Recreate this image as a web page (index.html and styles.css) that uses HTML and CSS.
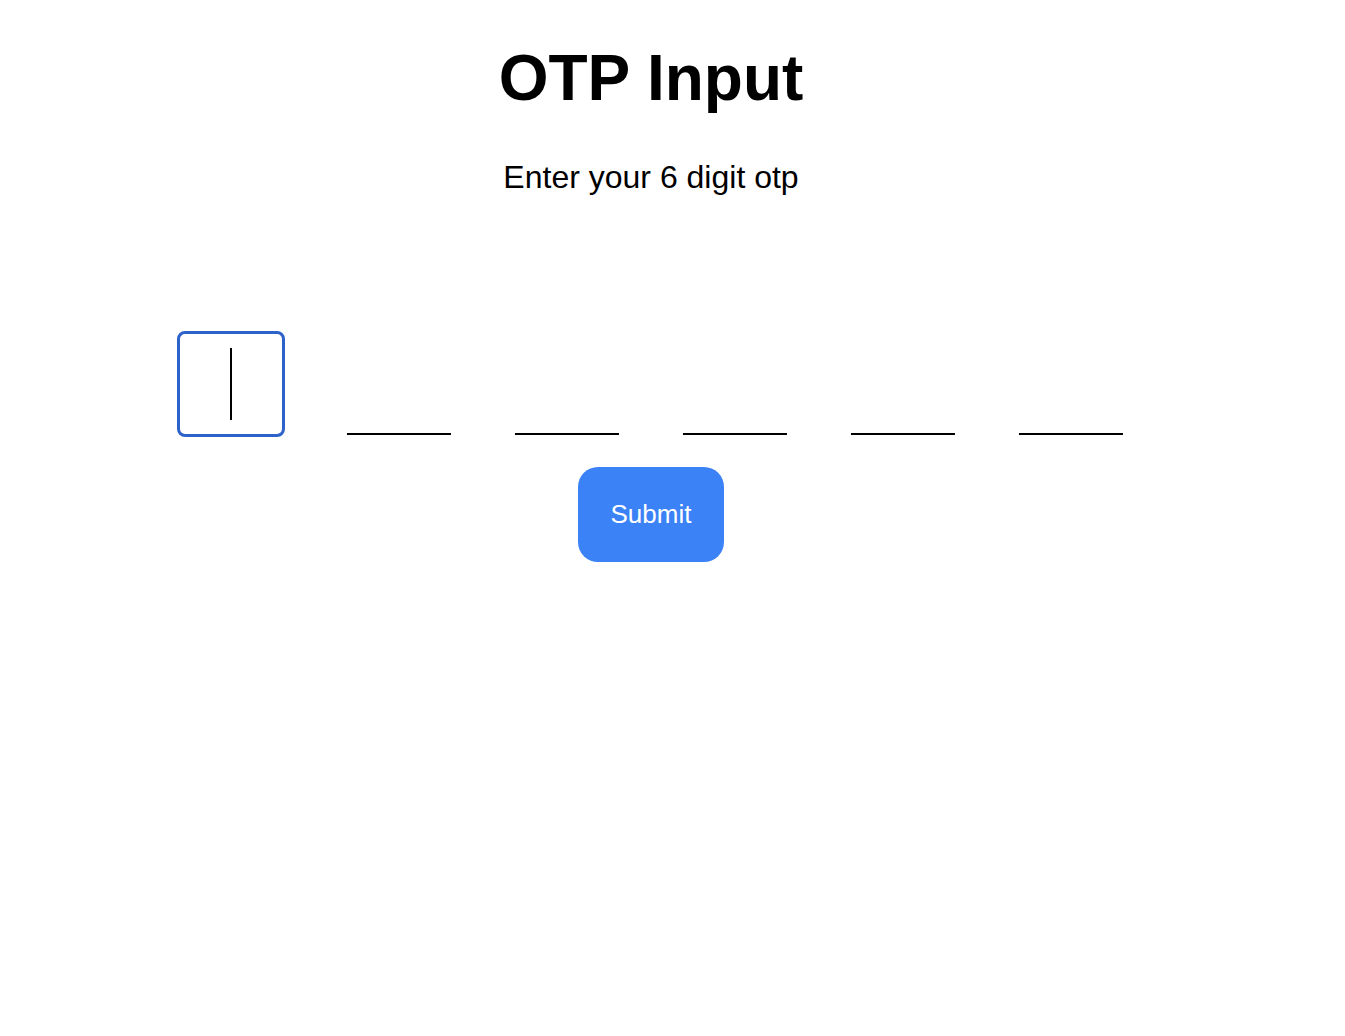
FILE: index.html
```html
<!DOCTYPE html>
<html lang="en">
<head>
<meta charset="utf-8">
<title>OTP Input</title>
<link rel="stylesheet" href="styles.css">
</head>
<body>
<div class="app">
  <h1 class="title">OTP Input</h1>
  <p class="subtitle">Enter your 6 digit otp</p>
  <div class="otp-row">
    <div class="otp-box is-focused"><span class="caret"></span></div>
    <div class="otp-box"></div>
    <div class="otp-box"></div>
    <div class="otp-box"></div>
    <div class="otp-box"></div>
    <div class="otp-box"></div>
  </div>
  <button class="submit" type="button">Submit</button>
</div>
</body>
</html>
```

FILE: styles.css
```css
html, body {
  background: #ffffff;
}
body {
  margin: 8px;
  font-family: "Liberation Sans", Arial, Helvetica, sans-serif;
  color: #000000;
}
.app {
  width: 1286px;
  display: flex;
  flex-direction: column;
  align-items: center;
}
.title {
  margin: 33px 0 0;
  font-size: 64px;
  line-height: 74px;
  font-weight: 700;
}
.subtitle {
  margin: 44px 0 0;
  font-size: 32px;
  line-height: 37px;
}
.otp-row {
  margin-top: 137px;
  display: flex;
  gap: 64px;
}
.otp-box {
  width: 104px;
  height: 100px;
  border-bottom: 2px solid #000000;
  display: flex;
  align-items: center;
  justify-content: center;
  box-sizing: content-box;
}
.otp-box.is-focused {
  border-bottom-color: transparent;
  outline: 3px solid #2c62c9;
  outline-offset: -1px;
  border-radius: 6px;
}
.caret {
  display: block;
  width: 2px;
  height: 72px;
  background: #000000;
  margin-top: 2px;
}
.submit {
  margin-top: 32px;
  padding: 32px 33px;
  border: none;
  border-radius: 20px;
  background: #3b82f6;
  color: #ffffff;
  font-family: "Liberation Sans", Arial, Helvetica, sans-serif;
  font-size: 26px;
  line-height: 31px;
}
```
